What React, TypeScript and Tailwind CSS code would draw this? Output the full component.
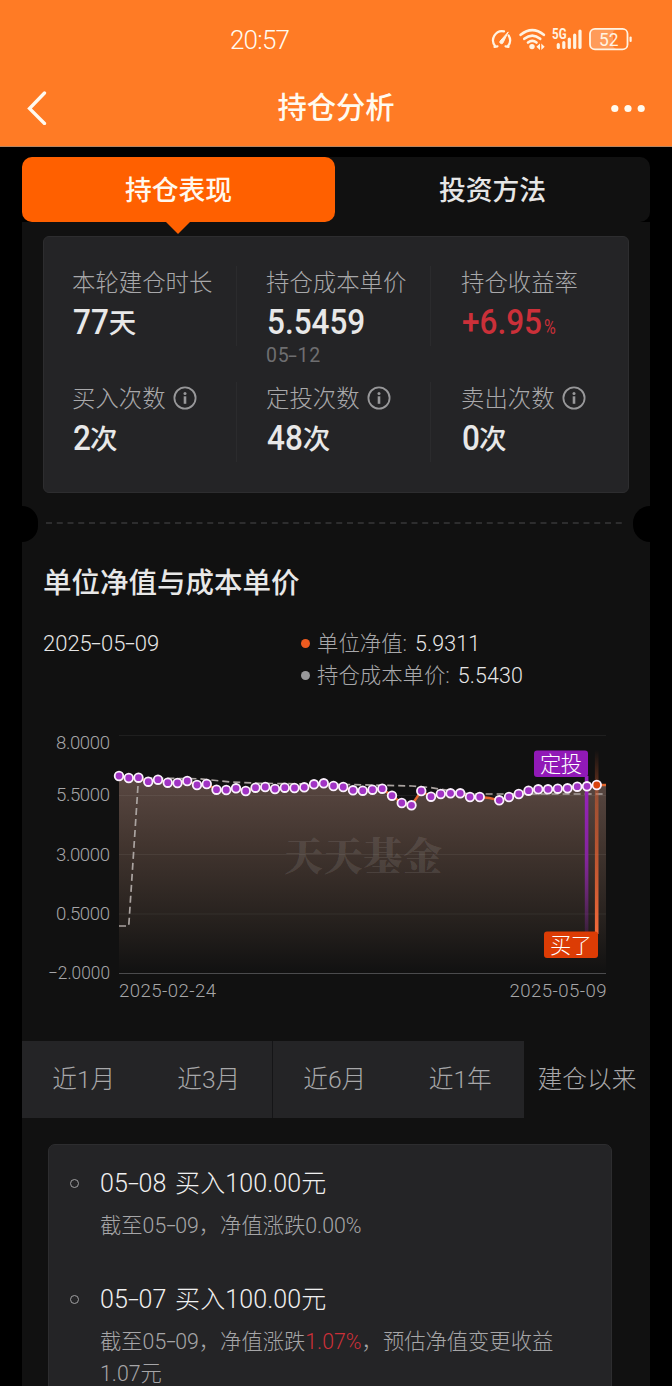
import { Fragment, type ReactNode } from "react";

const NAV = [
  776, 778, 777.7, 781.7, 779.7, 782.7, 783, 781, 785, 784, 789.7, 790, 788.3, 791, 787.7, 787, 789, 787.7, 788,
  787.3, 784.3, 783.3, 786, 787, 790.3, 790.7, 789.7, 788.7, 795.7, 803, 805.3, 791, 796.7, 794, 793.3, 793.3, 797,
  797, 798, 800.3, 797, 794, 790.7, 789.3, 789.3, 788.7, 788.3, 786.7, 786.3, 785,
].map((y, i) => ({ x: 119 + i * 9.75, y }));

const GRID = [
  { y: 735.5, label: "8.0000", ly: 749 },
  { y: 795.5, label: "5.5000", ly: 801 },
  { y: 854.5, label: "3.0000", ly: 860.5 },
  { y: 914, label: "0.5000", ly: 920 },
];

const LINE = NAV.map((p) => `${p.x},${p.y}`).join(" ") + " 606,785";

// Date text whose hyphens are stretched to a dash.
function Dashed({ text }: { text: string }) {
  return (
    <>
      {text.split("-").map((part, i) => (
        <Fragment key={i}>
          {i > 0 && (
            <span className="inline-flex w-[0.42em] justify-center">
              <span className="inline-block scale-x-[1.6]">-</span>
            </span>
          )}
          {part}
        </Fragment>
      ))}
    </>
  );
}

function InfoIcon() {
  return (
    <svg width="24" height="24" viewBox="0 0 24 24" fill="none" className="mb-px ml-[7px]">
      <circle cx="12" cy="12" r="10.6" stroke="#98989a" strokeWidth="1.8" />
      <circle cx="12" cy="7.4" r="1.5" fill="#98989a" />
      <path d="M12 10.3V17.8" stroke="#98989a" strokeWidth="2.6" />
    </svg>
  );
}

function Stat({
  label,
  value,
  unit,
  info,
  last,
  sub,
}: {
  label: string;
  value: ReactNode;
  unit?: ReactNode;
  info?: boolean;
  last?: boolean;
  sub?: string;
}) {
  return (
    <div className={`h-20 w-[194px] ${last ? "pl-[30px]" : "border-r border-[#2b2b2d] pl-[29px]"}`}>
      <div className="flex h-8 items-center pt-px text-[23.4px] leading-8 font-light whitespace-nowrap text-[#a8a8aa]">
        {label}
        {info && <InfoIcon />}
      </div>
      <div className="flex h-12 items-baseline pt-px pl-px text-[35px] leading-[48px] font-medium whitespace-nowrap text-[#e8e8e8]">
        <span className="inline-block origin-left scale-x-[0.9]">{value}</span>
        {unit}
      </div>
      {sub && (
        <div className="h-4 pt-0.5 text-[19.5px] leading-4 font-normal tracking-[0.7px] text-[#6e6e70]">
          <Dashed text={sub} />
        </div>
      )}
    </div>
  );
}

function StatusIcons() {
  return (
    <svg width="146" height="30" viewBox="488 25 146 30" fill="none" stroke="#fff3e2" strokeLinecap="round">
      <path d="M495.2 46.2A9.2 9.2 0 0 1 504 31.3M508.6 35.4A9.2 9.2 0 0 1 507.8 46.2" strokeWidth="2.2" />
      <path d="M494.5 46.8l3-.5M508.5 46.8l-3-.5" strokeWidth="2.2" />
      <path d="M508 32.2L500 41.2a1.7 1.7 0 0 0 2.7 2z" fill="#fff3e2" strokeWidth="1" />
      <g strokeWidth="2.7">
        <path d="M520.7 34.8Q532.3 25.6 543.8 34.8" />
        <path d="M524.3 38.8Q532.3 32.3 540.2 38.8" />
        <path d="M528 42.5Q532.3 39.2 536.5 42.5" />
      </g>
      <circle cx="532" cy="46.6" r="2.7" fill="#fff3e2" stroke="none" />
      <path d="M540 43.5v6.5l-3.6-3.2zM541.3 43.5v6.5l3.4-3.2z" fill="#fff3e2" stroke="none" />
      <text
        x="552"
        y="39"
        fontSize="14"
        fontWeight="700"
        fill="#fff3e2"
        stroke="none"
        textLength="14.5"
        lengthAdjust="spacingAndGlyphs"
      >
        5G
      </text>
      <g strokeWidth="3.2">
        <path d="M558.3 44.6V47.4M563.8 42.5V47.4M569.3 39V47.4M574.7 35V47.4M580 31V47.4" />
      </g>
      <rect x="590" y="28.8" width="37.5" height="20.6" rx="5" fill="#ff9b59" strokeWidth="1.8" />
      <rect x="613" y="30" width="13.3" height="18.2" rx="3" fill="#ff7b25" stroke="none" />
      <path d="M630.6 37.5V41" strokeWidth="2.2" />
      <text
        x="599"
        y="46"
        fontSize="19"
        fontWeight="400"
        fill="#fff3e2"
        stroke="none"
        textLength="19.5"
        lengthAdjust="spacingAndGlyphs"
      >
        52
      </text>
    </svg>
  );
}

function Chart() {
  return (
    <svg width="628" height="290" viewBox="22 720 628 290" className="block font-light">
      <defs>
        <linearGradient id="area" x1="0" y1="776" x2="0" y2="973" gradientUnits="userSpaceOnUse">
          <stop offset="0" stopColor="#5a4842" />
          <stop offset="0.35" stopColor="#42352f" />
          <stop offset="0.75" stopColor="#25201d" />
          <stop offset="1" stopColor="#111111" />
        </linearGradient>
        <linearGradient id="plan" x1="0" y1="776" x2="0" y2="942" gradientUnits="userSpaceOnUse">
          <stop offset="0" stopColor="#9a22c0" />
          <stop offset="0.5" stopColor="#83259b" />
          <stop offset="1" stopColor="#83259b" stopOpacity="0.15" />
        </linearGradient>
        <linearGradient id="bought" x1="0" y1="750" x2="0" y2="932" gradientUnits="userSpaceOnUse">
          <stop offset="0" stopColor="#e3602f" stopOpacity="0" />
          <stop offset="0.3" stopColor="#d95c2e" stopOpacity="0.6" />
          <stop offset="1" stopColor="#f2693a" />
        </linearGradient>
      </defs>

      <polygon points={`119,973 ${LINE} 606,973`} fill="url(#area)" />
      {GRID.map((g) => (
        <g key={g.label}>
          <path d={`M119 ${g.y}H606`} stroke="#ffffff" strokeOpacity="0.06" />
          <text x="110" y={g.ly} textAnchor="end" fontSize="18.6" fill="#a6a6a8" textLength="54">
            {g.label}
          </text>
        </g>
      ))}
      <path d="M119 973.5H606" stroke="#4b4b4d" />
      <text x="110" y="979" textAnchor="end" fontSize="18.6" fill="#a6a6a8" textLength="62" lengthAdjust="spacingAndGlyphs">
        −2.0000
      </text>
      <text x="119" y="996.5" fontSize="18.6" fill="#a6a6a8" textLength="97">
        2025-02-24
      </text>
      <text x="509.5" y="996.5" fontSize="18.6" fill="#a6a6a8" textLength="97">
        2025-05-09
      </text>

      <text
        x="284"
        y="870"
        fontSize="39"
        fontWeight="900"
        fill="#ffffff"
        fillOpacity="0.11"
        textLength="158"
        fontFamily="'Noto Serif CJK SC', 'Noto Sans CJK SC', serif"
      >
        天天基金
      </text>

      <polyline points={LINE} fill="none" stroke="#e5682f" strokeWidth="2.4" />
      <path
        d="M119 926H128.75L138.5 778L200 778.8L230 782L260 783.3L350 784.6L412 786L430 787.5L470 794H606"
        fill="none"
        stroke="#aaa3a0"
        strokeWidth="1.7"
        strokeDasharray="7 4"
      />
      <rect x="584.8" y="776" width="3.6" height="166" fill="url(#plan)" />
      <rect x="594.9" y="750" width="3.6" height="184" fill="url(#bought)" />
      <rect x="534" y="750.5" width="54" height="26.5" rx="3" fill="#9119b7" />
      <text x="540" y="771.5" fontSize="21.3" fill="#ffffff" textLength="42">
        定投
      </text>
      <rect x="544" y="931.5" width="54" height="26.5" rx="3" fill="#dc3c05" />
      <text x="550" y="952.5" fontSize="21.3" fill="#ffffff" textLength="42">
        买了
      </text>

      {NAV.map((p, i) =>
        i === 38 ? null : (
          <circle
            key={i}
            cx={p.x}
            cy={p.y}
            r="4.3"
            fill={i === 49 ? "#d9420d" : "#a133c4"}
            stroke="#fbf0fd"
            strokeWidth="1.8"
          />
        ),
      )}
    </svg>
  );
}

function Legend({ dot, label, value }: { dot: string; label: string; value: string }) {
  return (
    <div className="flex h-8 items-center text-[21.4px] whitespace-nowrap">
      <span className={`mr-[7px] size-[9px] rounded-full ${dot}`} />
      <span className="pt-0.5 text-[#a8a8aa]">{label}:</span>
      <span className="ml-2 pt-0.5 tracking-[0.1px] text-[#e6e6e6]">{value}</span>
    </div>
  );
}

function Trade({ title, className, children }: { title: string; className: string; children: ReactNode }) {
  return (
    <div className={`flex ${className}`}>
      <span className="mt-[11px] mr-[21px] size-[9px] shrink-0 rounded-full border border-[#a0a0a2]" />
      <div>
        <div className="h-8 text-[25px] leading-8 font-light tracking-[0.1px] [word-spacing:2.5px] whitespace-nowrap text-[#f0f0f0]">
          <Dashed text={title} />
        </div>
        <div className="mt-[10px] text-[21.3px] leading-8 whitespace-nowrap text-[#a6a6a8]">{children}</div>
      </div>
    </div>
  );
}

const PERIODS = ["近1月", "近3月", "近6月", "近1年"];

export default function App() {
  return (
    <div className="h-[1386px] w-[672px] overflow-hidden bg-black font-['Roboto','Noto_Sans_CJK_SC',sans-serif] font-light">
      <header className="h-[147px] border-b border-[#b9855f] bg-[#ff7b25] text-[#fffaf0]">
        <div className="flex h-[70px] items-center justify-between pt-[10px] pr-[38px] pl-[230px]">
          <span className="text-[26px] leading-8 tracking-[-0.8px]">20:57</span>
          <StatusIcons />
        </div>
        <div className="flex h-[76px] items-center justify-between pr-[26px] pl-[26px]">
          <svg width="36" height="34" viewBox="0 0 36 34" fill="none">
            <path d="M18.5 2L3.5 17.5L18.5 32.5" stroke="#fffaf0" strokeWidth="3.3" strokeLinecap="round" />
          </svg>
          <h1 className="text-[29.3px] leading-9 font-medium">持仓分析</h1>
          <svg width="36" height="10" viewBox="0 0 36 10" fill="#fffaf0">
            <circle cx="4.8" cy="5.5" r="3.6" />
            <circle cx="18" cy="5.5" r="3.6" />
            <circle cx="31.2" cy="5.5" r="3.6" />
          </svg>
        </div>
      </header>

      <main className="mx-[22px] pt-[10px]">
        <div className="flex h-[65px] rounded-[10px] bg-[#111] text-[26.8px] font-medium">
          <div className="relative flex w-[313px] items-center justify-center rounded-[10px] bg-[#ff6000] pt-[3px] text-[#fff8ee]">
            持仓表现
            <svg width="24" height="12" viewBox="0 0 24 12" className="absolute top-full left-[144px]">
              <path d="M0 0H24L12 12z" fill="#ff6000" />
            </svg>
          </div>
          <div className="flex w-[315px] items-center justify-center pt-[3px] text-[#e6e6e6]">投资方法</div>
        </div>

        <div className="h-[1164px] overflow-hidden bg-[#111] pt-[14px]">
          <section className="mx-[21px] h-[257px] rounded-md border border-[#2d2d2f] bg-[#242426] pt-[29px]">
            <div className="-ml-px flex h-[116px]">
              <Stat
                label="本轮建仓时长"
                value="77"
                unit={<span className="relative -top-px -ml-[4px] text-[27.5px]">天</span>}
              />
              <Stat label="持仓成本单价" value="5.5459" sub="05-12" />
              <Stat
                label="持仓收益率"
                last
                value={
                  <span className="text-[#cb3039]">
                    +6.95
                    <span className="ml-0.5 inline-block origin-left scale-x-[0.85] text-[21px] font-normal">%</span>
                  </span>
                }
              />
            </div>
            <div className="-ml-px flex">
              <Stat
                label="买入次数"
                info
                value="2"
                unit={<span className="relative -top-px -ml-[3px] text-[27.5px]">次</span>}
              />
              <Stat
                label="定投次数"
                info
                value="48"
                unit={<span className="relative -top-px -ml-[4px] text-[27.5px]">次</span>}
              />
              <Stat
                label="卖出次数"
                info
                last
                value="0"
                unit={<span className="relative -top-px -ml-[3px] text-[27.5px]">次</span>}
              />
            </div>
          </section>

          <div className="mt-[13px] flex h-9 items-center justify-between">
            <span className="h-9 w-4 rounded-r-full bg-black" />
            <svg width="576" height="2" viewBox="0 0 576 2" className="mr-[3px] mb-[2px]">
              <path d="M0 1H576" stroke="#373739" strokeWidth="1.6" strokeDasharray="6 4.75" />
            </svg>
            <span className="h-9 w-[17px] rounded-l-full bg-black" />
          </div>

          <h2 className="mt-[22px] ml-[21px] h-10 text-[28.5px] leading-10 font-medium text-[#e8e8e8]">
            单位净值与成本单价
          </h2>

          <div className="mt-[23px] flex h-16 pl-[21px]">
            <div className="w-[258px] pt-px text-[22px] leading-8 text-[#e6e6e6]">
              <Dashed text="2025-05-09" />
            </div>
            <div>
              <Legend dot="bg-[#ed5b20]" label="单位净值" value="5.9311" />
              <Legend dot="bg-[#98989a]" label="持仓成本单价" value="5.5430" />
            </div>
          </div>

          <div className="mt-[29px]">
            <Chart />
          </div>

          <div className="mt-[31px] flex h-[77px] text-[24.7px] text-[#a8a8aa]">
            {PERIODS.map((p, i) => (
              <div
                key={p}
                className={`flex w-[125.5px] items-center justify-center bg-[#242426] pt-px pr-0.5 ${i === 1 ? "border-r border-[#151517]" : ""}`}
              >
                {p}
              </div>
            ))}
            <div className="flex flex-1 items-center justify-center pt-px">建仓以来</div>
          </div>

          <section className="mt-[26px] ml-[26px] h-[260px] w-[564px] rounded-[7px] border border-[#2d2d2f] bg-[#242426] pt-[23px] pl-[21px]">
            <Trade title="05-08 买入100.00元" className="h-[116px]">
              <Dashed text="截至05-09，净值涨跌0.00%" />
            </Trade>
            <Trade title="05-07 买入100.00元" className="h-[140px]">
              <Dashed text="截至05-09，净值涨跌" />
              <span className="text-[#cb3039]">1.07%</span>，预估净值变更收益
              <br />
              1.07元
            </Trade>
          </section>
        </div>
      </main>
    </div>
  );
}
